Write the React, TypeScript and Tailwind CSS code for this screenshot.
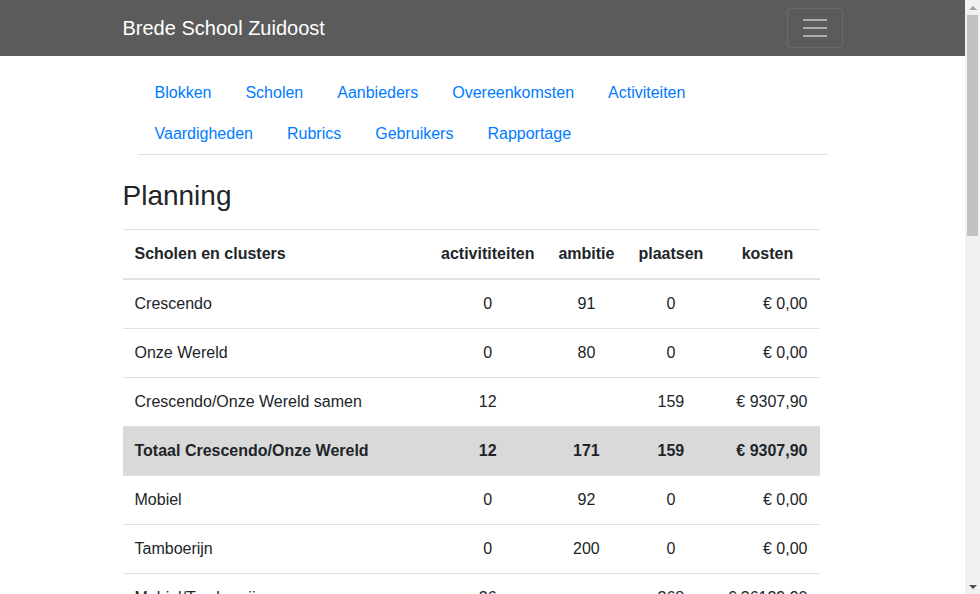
import React from "react";

const links = [
	"Blokken",
	"Scholen",
	"Aanbieders",
	"Overeenkomsten",
	"Activiteiten",
	"Vaardigheden",
	"Rubrics",
	"Gebruikers",
	"Rapportage",
];

type Row = {
	name: string;
	act: string;
	amb: string;
	plaatsen: string;
	kosten: string;
	total?: boolean;
};

const rows: Row[] = [
	{ name: "Crescendo", act: "0", amb: "91", plaatsen: "0", kosten: "€ 0,00" },
	{ name: "Onze Wereld", act: "0", amb: "80", plaatsen: "0", kosten: "€ 0,00" },
	{ name: "Crescendo/Onze Wereld samen", act: "12", amb: "", plaatsen: "159", kosten: "€ 9307,90" },
	{ name: "Totaal Crescendo/Onze Wereld", act: "12", amb: "171", plaatsen: "159", kosten: "€ 9307,90", total: true },
	{ name: "Mobiel", act: "0", amb: "92", plaatsen: "0", kosten: "€ 0,00" },
	{ name: "Tamboerijn", act: "0", amb: "200", plaatsen: "0", kosten: "€ 0,00" },
	{ name: "Mobiel/Tamboerijn", act: "36", amb: "", plaatsen: "368", kosten: "€ 36129,90" },
	{ name: "Totaal Mobiel/Tamboerijn", act: "36", amb: "292", plaatsen: "368", kosten: "€ 36129,90", total: true },
	{ name: "Totaal", act: "48", amb: "463", plaatsen: "527", kosten: "€ 45437,80", total: true },
];

function Scrollbar() {
	return (
		<div className="flex h-full w-[15px] shrink-0 flex-col bg-[#f1f1f1]">
			<div className="flex h-[15px] items-center justify-center">
				<div className="h-0 w-0 border-x-4 border-b-4 border-x-transparent border-b-[#a3a3a3]" />
			</div>
			<div className="flex-1">
				<div className="mx-[2px] h-[221px] bg-[#c1c1c1]" />
			</div>
			<div className="flex h-[15px] items-center justify-center">
				<div className="h-0 w-0 border-x-4 border-t-4 border-x-transparent border-t-[#505050]" />
			</div>
		</div>
	);
}

export default function App() {
	return (
		<div className="flex h-screen overflow-hidden bg-white text-[16px] leading-6 text-[#212529] font-['Liberation_Sans',Arial,sans-serif]">
			<div className="flex-1 overflow-hidden">
				<nav className="h-14 bg-[#5b5b5b]">
					<div className="mx-auto flex h-full w-[720px] items-center justify-between">
						<span className="text-[20px] leading-[30px] text-white">
							Brede School Zuidoost
						</span>
						<button className="flex h-10 w-14 flex-col items-center justify-center gap-[6px] rounded border border-white/10">
							<span className="h-[2px] w-[24px] bg-[#adadad]" />
							<span className="h-[2px] w-[24px] bg-[#adadad]" />
							<span className="h-[2px] w-[24px] bg-[#adadad]" />
						</button>
					</div>
				</nav>

				<div className="mx-auto w-[720px] pt-4">
					<ul className="mx-[15px] flex flex-wrap border-b border-[#dee2e6]">
						{links.map((l) => (
							<li key={l}>
								<a className="block px-[17px] py-2 leading-[25px] text-[#007bff]">
									{l}
								</a>
							</li>
						))}
					</ul>

					<h3 className="mt-[24px] mb-[16px] text-[28px] leading-[34px] font-normal">
						Planning
					</h3>

					<table className="w-[697px] border-collapse">
						<thead>
							<tr className="border-t border-[#dee2e6]">
								<th className="w-[307px] border-b-2 border-[#dee2e6] p-3 text-left font-bold">
									Scholen en clusters
								</th>
								<th className="w-[117px] border-b-2 border-[#dee2e6] p-3 text-center font-bold">
									activititeiten
								</th>
								<th className="w-[80px] border-b-2 border-[#dee2e6] p-3 text-center font-bold">
									ambitie
								</th>
								<th className="w-[89px] border-b-2 border-[#dee2e6] p-3 text-center font-bold">
									plaatsen
								</th>
								<th className="w-[104px] border-b-2 border-[#dee2e6] p-3 text-center font-bold">
									kosten
								</th>
							</tr>
						</thead>
						<tbody>
							{rows.map((r) => (
								<tr
									key={r.name}
									className={
										r.total
											? "border-t border-[#dee2e6] bg-[#d9d9d9] font-bold"
											: "border-t border-[#dee2e6]"
									}
								>
									<td className="p-3 text-left">{r.name}</td>
									<td className="p-3 text-center">{r.act}</td>
									<td className="p-3 text-center">{r.amb}</td>
									<td className="p-3 text-center">{r.plaatsen}</td>
									<td className="whitespace-nowrap p-3 text-right">{r.kosten}</td>
								</tr>
							))}
						</tbody>
					</table>
				</div>
			</div>
			<Scrollbar />
		</div>
	);
}
